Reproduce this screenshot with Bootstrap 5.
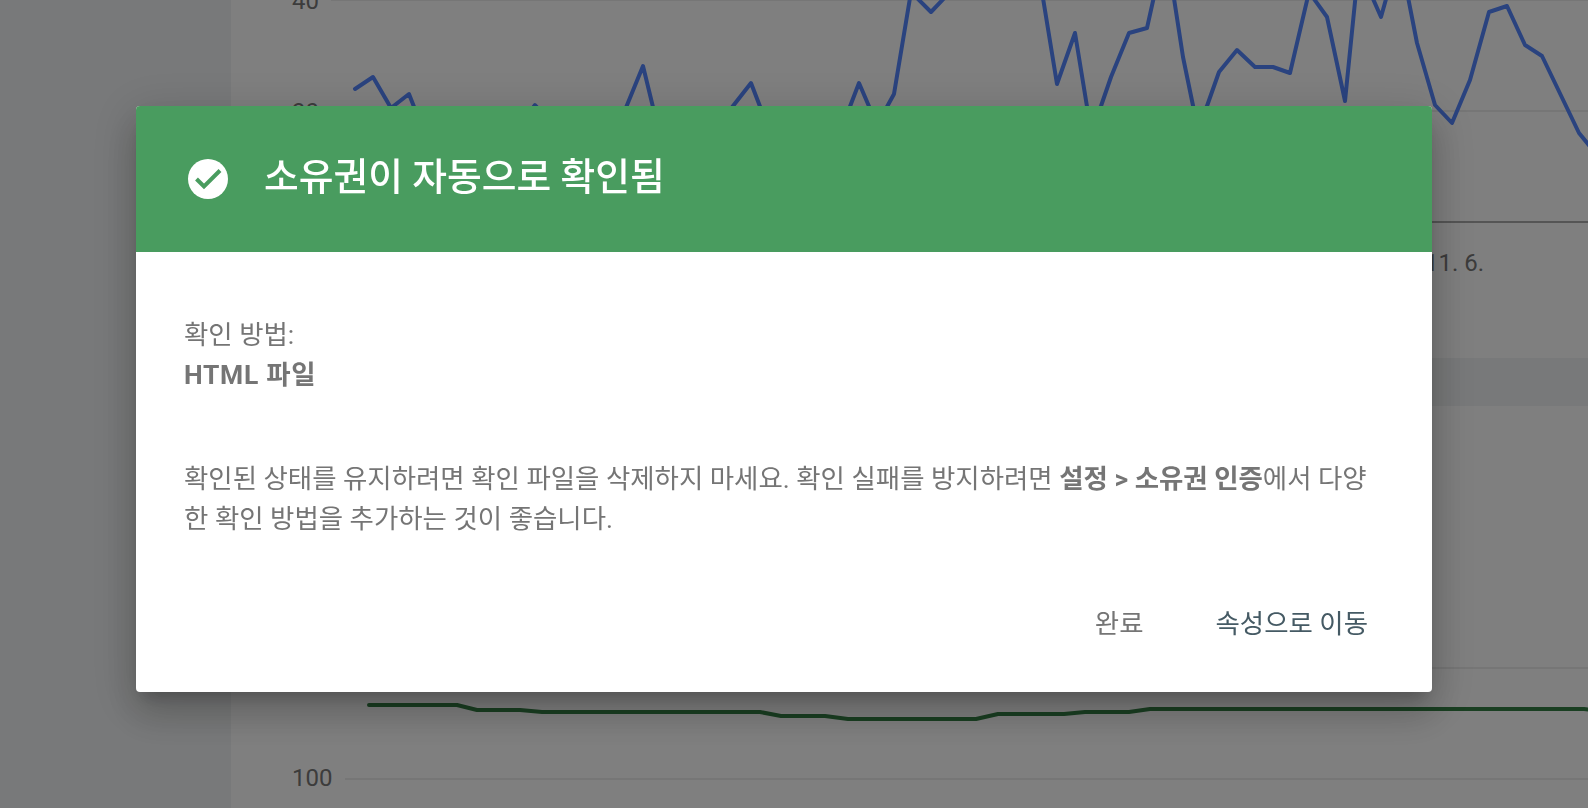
<!doctype html>
<html lang="ko">
<head>
<meta charset="utf-8">
<title>소유권이 자동으로 확인됨</title>
<link href="https://cdn.jsdelivr.net/npm/bootstrap@5.3.0/dist/css/bootstrap.min.css" rel="stylesheet">
<style>
html,body{height:100%;overflow:hidden}
body{font-family:Roboto,"Noto Sans CJK KR",sans-serif;background:#fff}
.side-rail{width:231px;background:#f1f3f4}
.chart-area{min-width:0}
.chart-svg{display:block;width:1357px;height:808px}
.chart-svg text{font-family:Roboto,sans-serif;font-size:24px;fill:#787878}
.scrim{position:fixed;inset:0;background:rgba(0,0,0,.5);padding:106px 0 0 136px}
.verify-dialog{width:1296px;height:586px;border:0;border-radius:4px;overflow:hidden;background:#fff;
  box-shadow:0 22px 36px 3px rgba(0,0,0,.14),0 9px 46px 8px rgba(0,0,0,.12),0 11px 15px -7px rgba(0,0,0,.2)}
.verify-head{height:146px;background:#499c5f;color:#fff;padding:0 52px 2px;gap:36px;border:0;border-radius:0}
.verify-head svg{margin-top:2px}
.verify-head h1{font-size:37.75px;font-weight:500;margin:0;line-height:1}
.verify-body{padding:0 48px;color:#757575;font-size:26.45px;line-height:40.5px;flex:0 0 auto}
.verify-method{padding-top:62.5px;margin-bottom:63px}
.verify-body b{font-weight:700}
.method-name{letter-spacing:.7px}
.verify-foot{padding:0 47px 48px 0;border:0;margin-top:auto;gap:38px;justify-content:flex-end}
.verify-foot .btn{font-size:26.45px;line-height:40px;padding:0 17px;border:0;border-radius:0;color:#757575;margin:0}
.verify-foot .btn.go-prop{color:#455a64}
</style>
</head>
<body>
<div class="d-flex h-100">
  <div class="side-rail flex-shrink-0"></div>
  <div class="chart-area flex-grow-1">
    <svg class="chart-svg" viewBox="231 0 1357 808" aria-hidden="true">
      <rect x="231" y="358" width="1357" height="48" fill="#f1f3f4"/>
      <g stroke="#ececec" stroke-width="2">
        <line x1="331" x2="1588" y1="0" y2="0"/>
        <line x1="331" x2="1588" y1="111" y2="111"/>
        <line x1="331" x2="1588" y1="668" y2="668"/>
        <line x1="345" x2="1588" y1="779" y2="779"/>
      </g>
      <line x1="331" x2="1588" y1="222" y2="222" stroke="#aaa" stroke-width="2"/>
      <text x="292" y="9">40</text>
      <text x="292" y="120">30</text>
      <text x="292" y="786">100</text>
      <text x="1425" y="271">11. 6.</text>
      <polyline fill="none" stroke="#5587fe" stroke-width="4" stroke-linejoin="round" stroke-linecap="round"
        points="355,89 373,77 391,108 409,94 427,140 445,140 463,140 481,140 499,130 517,130 535,105 553,125 571,125 589,130 607,130 625,110 643,66 661,140 679,130 697,130 715,130 733,106 751,83 769,130 787,130 805,130 823,130 841,130 859,83 877,125 894,94 911,-8 931,12 950,-8 1042,-8 1057,84 1075,33 1090,125 1101,106 1111,77 1129,33 1147,28 1155,-8 1173,-8 1183,57 1197,125 1207,106 1219,72 1237,50 1255,67 1273,67 1290,73 1309,-8 1327,17 1345,101 1356,-8 1370,-8 1381,17 1388,-8 1407,-8 1417,43 1435,105 1452,123 1470,80 1489,12 1507,6 1525,45 1542,56 1579,133 1597,155"/>
      <polyline fill="none" stroke="#347e44" stroke-width="4" stroke-linejoin="round" stroke-linecap="round"
        points="369,705 457,705 477,710 520,710 542,712 760,712 781,716 825,716 848,719 976,719 998,714 1064,714 1085,712 1129,712 1150,709 1584,709 1600,711"/>
    </svg>
  </div>
</div>

<div class="scrim">
  <div class="modal-content verify-dialog">
    <div class="modal-header verify-head d-flex align-items-center justify-content-start">
      <svg width="40" height="40" viewBox="0 0 40 40" aria-hidden="true" class="flex-shrink-0">
        <circle cx="20" cy="20" r="20" fill="#fff"/>
        <path d="M8.5 20l7.5 7.5 16-16" fill="none" stroke="#499c5f" stroke-width="4"/>
      </svg>
      <h1>소유권이 자동으로 확인됨</h1>
    </div>
    <div class="modal-body verify-body">
      <div class="verify-method">
        <div>확인 방법:</div>
        <div class="method-name"><b>HTML 파일</b></div>
      </div>
      <div>확인된 상태를 유지하려면 확인 파일을 삭제하지 마세요. 확인 실패를 방지하려면 <b>설정 &gt; 소유권 인증</b>에서 다양한 확인 방법을 추가하는 것이 좋습니다.</div>
    </div>
    <div class="modal-footer verify-foot">
      <button type="button" class="btn">완료</button>
      <button type="button" class="btn go-prop">속성으로 이동</button>
    </div>
  </div>
</div>
<script src="https://cdn.jsdelivr.net/npm/bootstrap@5.3.0/dist/js/bootstrap.bundle.min.js"></script>
</body>
</html>
